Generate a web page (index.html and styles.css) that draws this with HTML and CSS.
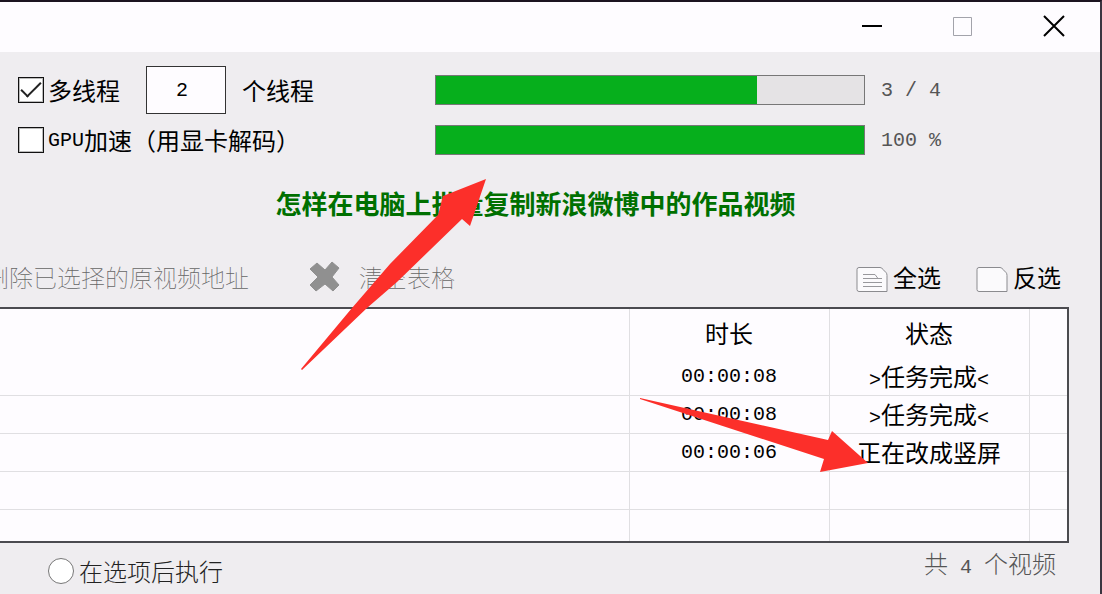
FILE: index.html
```
<!DOCTYPE html>
<html lang="zh-CN">
<head>
    <meta charset="UTF-8">
    <meta name="viewport" content="width=device-width, initial-scale=1.0">
    <title>视频批量处理</title>
    <link rel="stylesheet" href="styles.css">
</head>
<body>
    <div class="window">
        <div class="titlebar">
            <button class="win-button" type="button" aria-label="最小化">
                <svg width="22" height="22" viewBox="0 0 22 22"><path d="M1 11h20" stroke="#000" stroke-width="2"/></svg>
            </button>
            <button class="win-button" type="button" aria-label="最大化" disabled>
                <svg width="22" height="22" viewBox="0 0 22 22"><path d="M1.500 2.500h18v18h-18z" fill="none" stroke="#a3a3ab"/></svg>
            </button>
            <button class="win-button" type="button" aria-label="关闭">
                <svg width="22" height="22" viewBox="0 0 22 22"><path d="M1 1l20 20M21 1L1 21" stroke="#000" stroke-width="2"/></svg>
            </button>
        </div>

        <div class="settings">
            <div class="row">
                <div class="options">
                    <label class="check"><input type="checkbox" checked>多线程</label>
                    <input class="threads" id="threads" type="text" value="2">
                    <label for="threads">个线程</label>
                </div>
                <progress class="bar" value="75" max="100" aria-label="任务进度"></progress>
                <span class="bar-text">3 / 4</span>
            </div>
            <div class="row">
                <div class="options">
                    <label class="check"><input type="checkbox"><span class="latin">GPU</span>加速（用显卡解码）</label>
                </div>
                <progress class="bar" value="100" max="100" aria-label="当前进度"></progress>
                <span class="bar-text">100 %</span>
            </div>
        </div>

        <h1>怎样在电脑上批量复制新浪微博中的作品视频</h1>

        <div class="toolbar">
            <button class="tool tool-delete" type="button" disabled>删除已选择的原视频地址</button>
            <button class="tool tool-clear" type="button" disabled>
                <svg width="32" height="32" viewBox="0 0 32 32"><path d="M8 2L16 9L23 1L30 7L23 16L30 24L24 30L16 23L7 30L1 24L9 16L1 8Z" fill="#909090" stroke="#909090" stroke-linejoin="round"/></svg>
                清空表格
            </button>
            <div class="select-tools">
                <button class="tool" type="button">
                    <svg class="sheet" width="32" height="26" viewBox="0 0 32 26"><path d="M3 1.500h21q2 0 3 2l3 3q1 1 1 3v16H3q-2 0-2-2v-20q0-2 2-2z" fill="#fbfafc" stroke="#8b8b8f"/><path d="M7 8.500h12l3 4M7 12.500h19M7 16.500h19M7 20.500h19" fill="none" stroke="#98989c"/></svg>
                    全选
                </button>
                <button class="tool" type="button">
                    <svg class="sheet" width="32" height="26" viewBox="0 0 32 26"><path d="M3 1.500h21q2 0 3 2l3 3q1 1 1 3v16H3q-2 0-2-2v-20q0-2 2-2z" fill="#fbfafc" stroke="#8b8b8f"/></svg>
                    反选
                </button>
            </div>
        </div>

        <div class="table-box">
            <table>
                <thead>
                    <tr><th></th><th class="col">时长</th><th class="col">状态</th><th class="col-end"></th></tr>
                </thead>
                <tbody>
                    <tr><td></td><td class="time">00:00:08</td><td><span class="latin">&gt;</span>任务完成<span class="latin">&lt;</span></td><td></td></tr>
                    <tr><td></td><td class="time">00:00:08</td><td><span class="latin">&gt;</span>任务完成<span class="latin">&lt;</span></td><td></td></tr>
                    <tr><td></td><td class="time">00:00:06</td><td>正在改成竖屏</td><td></td></tr>
                    <tr><td></td><td></td><td></td><td></td></tr>
                    <tr class="last"><td></td><td></td><td></td><td></td></tr>
                </tbody>
            </table>
        </div>

        <div class="footer">
            <label class="check"><input type="radio" name="run">在选项后执行</label>
            <span class="total">共<span class="latin"> 4 </span>个视频</span>
        </div>

        <!-- pointer arrows -->
        <svg class="arrow arrow-bar" width="188" height="194" viewBox="0 0 188 194"><path d="M185 1L169 48L161 41L96 104L66 130L1 192L0 191L51 130L89 86L137 37L142 18Z" fill="#fc2f2a"/></svg>
        <svg class="arrow arrow-status" width="230" height="80" viewBox="0 0 230 80"><path d="M0 4L188 46L192 37L228 69L180 78L184 65L0 5Z" fill="#fc2f2a"/></svg>
    </div>
</body>
</html>
```
FILE: styles.css
```
* {
    box-sizing: border-box;
}

body {
    margin: 0;
    color: #000;
    background: #efedf0;
    font-family: "Noto Sans CJK SC", sans-serif;
    font-size: 24px;
    font-weight: 400;
    line-height: 32px;
}

button, input {
    font: inherit;
    color: inherit;
}

.window {
    position: relative;
    min-height: 100vh;
    overflow: hidden;
    border-top: 2px solid #1c1420;
    border-right: 2px solid #3a3540;
}

.titlebar {
    display: flex;
    justify-content: flex-end;
    height: 50px;
    padding: 0 1px 2px 0;
    background: #fefcff;
}

.win-button {
    display: flex;
    align-items: center;
    justify-content: center;
    width: 91px;
    padding: 0;
    border: none;
    background: none;
}

.settings {
    padding: 13px 0 0 18px;
}

.row {
    display: flex;
    align-items: center;
    height: 50px;
}

.options {
    display: flex;
    align-items: center;
    gap: 16px;
    width: 417px;
}

.check {
    display: flex;
    align-items: center;
}

.check input {
    appearance: none;
    display: flex;
    align-items: center;
    justify-content: center;
    width: 26px;
    height: 26px;
    margin: 0 4px 0 0;
    border: 1px solid #111;
    outline: 1px solid #bbb;
    outline-offset: -2px;
    background: #fff;
}

.check input[type="checkbox"]:checked::before {
    content: "";
    width: 18px;
    height: 8px;
    margin-bottom: 6px;
    border-left: 2px solid #222;
    border-bottom: 2px solid #222;
    transform: rotate(-45deg);
}

.check input[type="radio"] {
    margin-right: 5px;
    border: 1px solid #777;
    border-radius: 50%;
    outline: none;
}

.latin, .time, .bar-text, .threads {
    font-family: "Liberation Mono", monospace;
    font-size: 20px;
    white-space: pre;
}

.latin {
    line-height: 20px;
}

.check .latin, .time, .bar-text {
    padding-top: 2px;
}

.threads {
    width: 80px;
    height: 48px;
    margin-left: 10px;
    padding: 0 8px 0 0;
    border: 1px solid #333;
    background: #fefcff;
    text-align: center;
}

.bar {
    appearance: none;
    flex: 1;
    height: 30px;
    border: 1px solid #777;
    background: #e5e3e5;
}

.bar::-webkit-progress-bar {
    background: #e5e3e5;
}

.bar::-webkit-progress-value {
    background: #06af1c;
}

.bar-text {
    width: 235px;
    padding-left: 16px;
    color: #555;
}

h1 {
    margin: 19px 29px 0 0;
    color: #007000;
    font-size: 26px;
    font-weight: 700;
    line-height: 38px;
    text-align: center;
}

.toolbar {
    display: flex;
    align-items: center;
    height: 60px;
    margin: 25px 39px 0 0;
}

.tool {
    display: flex;
    align-items: center;
    gap: 5px;
    padding: 0;
    border: none;
    background: none;
    white-space: nowrap;
}

.tool:disabled {
    color: #666;
    font-weight: 100;
}

.tool-delete {
    justify-content: flex-end;
    width: 249px;
    overflow: hidden;
}

.tool-clear {
    gap: 18px;
    margin-left: 60px;
}

.select-tools {
    display: flex;
    gap: 35px;
    margin-left: auto;
}

.sheet {
    margin-top: 4px;
}

.table-box {
    height: 236px;
    margin-right: 31px;
    overflow: hidden;
    border: 2px solid #4b4b50;
    border-left: none;
    background: #fefcff;
}

table {
    width: 100%;
    table-layout: fixed;
    border-collapse: collapse;
    text-align: center;
}

th, td {
    height: 38px;
    padding: 0;
    border-right: 1px solid #e0dfe2;
    border-bottom: 1px solid #e0dfe2;
}

th {
    height: 48px;
    border-bottom: none;
    font-weight: 400;
}

th:last-child, td:last-child {
    border-right: none;
}

.col {
    width: 200px;
}

.col-end {
    width: 38px;
}

.last td {
    border-bottom: none;
}

.footer {
    display: flex;
    justify-content: space-between;
    padding: 4px 44px 0 48px;
    color: #222;
    font-weight: 300;
}

.footer .check {
    padding-top: 8px;
}

.total {
    color: #555;
}

.arrow {
    position: absolute;
}

.arrow-bar {
    top: 176px;
    left: 301px;
}

.arrow-status {
    top: 392px;
    left: 640px;
}
```
